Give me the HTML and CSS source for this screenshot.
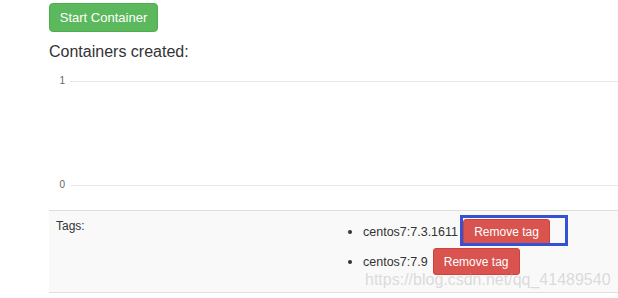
FILE: index.html
```html
<!DOCTYPE html>
<html>
<head>
<meta charset="utf-8">
<link rel="stylesheet" href="styles.css">
</head>
<body>
<div class="page">
  <button class="btn btn-start">Start Container</button>
  <h4 class="title">Containers created:</h4>
  <div class="chart">
    <div class="axis-row"><span class="axis-label">1</span><span class="axis-line"></span></div>
    <div class="axis-row axis-bottom"><span class="axis-label">0</span><span class="axis-line"></span></div>
  </div>
  <div class="tags-table">
    <div class="tags-label">Tags:</div>
    <ul class="tag-list">
      <li class="tag-item"><span class="tag-name">centos7:7.3.1611</span><span class="btn-wrap"><button class="btn btn-remove">Remove tag</button><span class="highlight"></span></span></li>
      <li class="tag-item"><span class="tag-name">centos7:7.9</span><span class="btn-wrap"><button class="btn btn-remove">Remove tag</button></span></li>
    </ul>
    <div class="watermark">https://blog.csdn.net/qq_41489540</div>
  </div>
</div>
</body>
</html>
```
FILE: styles.css
```css
html, body {
  margin: 0;
  padding: 0;
  background: #fff;
  overflow: hidden;
}
body {
  width: 618px;
  height: 298px;
  font-family: "Liberation Sans", Arial, sans-serif;
  color: #333;
}
.page {
  padding: 3px 0 0 49px;
}
.btn {
  font-family: "Liberation Sans", Arial, sans-serif;
  color: #fff;
  cursor: pointer;
  box-sizing: border-box;
  display: inline-flex;
  align-items: center;
  justify-content: center;
  margin: 0;
  white-space: nowrap;
}
.btn-start {
  height: 29px;
  width: 109px;
  padding: 0;
  font-size: 13px;
  background: #5cb85c;
  border: 1px solid #4cae4c;
  border-radius: 4px;
}
.title {
  margin: 11px 0 0 0;
  font-size: 16px;
  line-height: 18px;
  font-weight: normal;
  color: #333;
}
.chart {
  padding-top: 15px;
}
.axis-row {
  display: flex;
  align-items: center;
  height: 10px;
}
.axis-bottom {
  margin-top: 94px;
}
.axis-label {
  width: 16px;
  text-align: right;
  font-size: 10px;
  line-height: 10px;
  color: #666;
}
.axis-line {
  flex: 1;
  height: 1px;
  margin-left: 5px;
  background: #e8e8e8;
}
.tags-table {
  position: relative;
  margin-top: 20px;
  height: 81px;
  border-top: 1px solid #ddd;
  border-bottom: 1px solid #ddd;
  background: #f9f9f9;
  display: grid;
  grid-template-columns: 299px 1fr;
}
.tags-label {
  padding: 8px 0 0 7px;
  font-size: 12px;
  line-height: 14px;
}
.tag-list {
  list-style: none;
  margin: 0;
  padding: 7.5px 0 0 0;
}
.tag-item {
  display: flex;
  align-items: center;
  height: 27px;
  margin-bottom: 2.5px;
  font-size: 12.5px;
}
.tag-item::before {
  content: "";
  width: 4px;
  height: 4px;
  border-radius: 50%;
  background: #333;
  margin-right: 11px;
}
.btn-wrap {
  position: relative;
  display: inline-flex;
  margin-left: 5px;
}
.btn-remove {
  height: 27px;
  width: 87px;
  padding: 0;
  font-size: 12px;
  background: #d9534f;
  border: 1px solid #d43f3a;
  border-radius: 3px;
}
.highlight {
  position: absolute;
  left: -3px;
  top: -4px;
  width: 108px;
  height: 31px;
  box-sizing: border-box;
  border: 3px solid #3352d4;
  pointer-events: none;
}
.watermark {
  position: absolute;
  left: 316px;
  top: 60px;
  font-size: 16px;
  line-height: 18px;
  color: rgba(170, 170, 170, 0.4);
  white-space: nowrap;
  pointer-events: none;
}
```
